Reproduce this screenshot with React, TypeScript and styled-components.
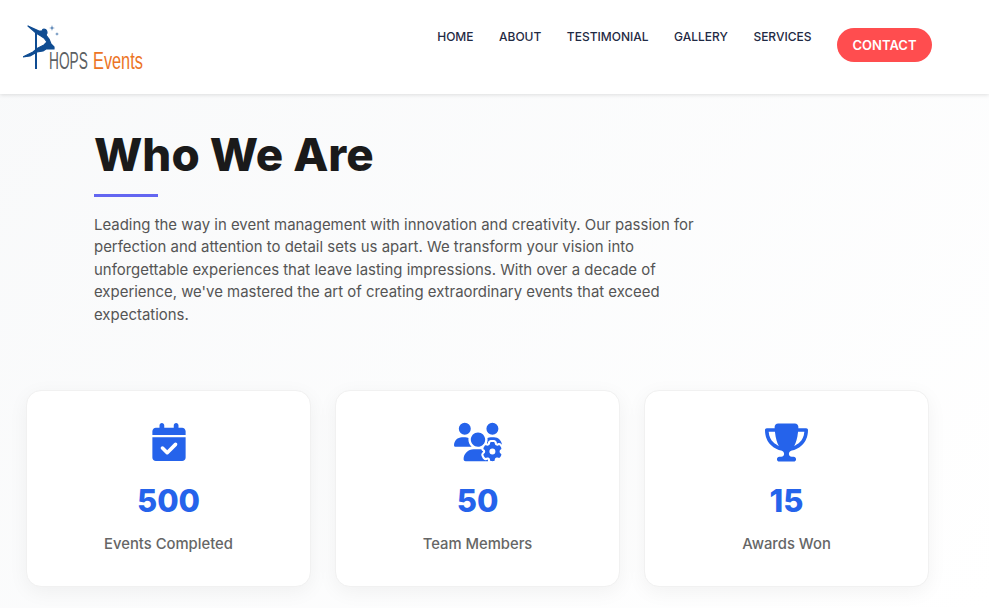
import React from "react";
import styled, { createGlobalStyle } from "styled-components";
import { FaCalendarCheck, FaTrophy, FaUsersGear } from "react-icons/fa6";

const GlobalStyle = createGlobalStyle`
  html, body {
    margin: 0;
    padding: 0;
    height: 608px;
    overflow: hidden;
    background: #fff;
    font-family: "Inter", "Open Sans", sans-serif;
  }
  * { box-sizing: border-box; }
`;

const Page = styled.div`
  width: 989px;
  height: 608px;
  overflow: hidden;
  background: linear-gradient(135deg, #f8f9fa 0%, #ffffff 100%);
`;

const Header = styled.header`
  height: 94px;
  background: #fff;
  box-shadow: 0 1px 4px rgba(0, 0, 0, 0.12);
  display: flex;
  justify-content: space-between;
  align-items: flex-start;
  padding: 0 57px 0 23px;
`;

const Logo = styled.a`
  display: flex;
  align-items: flex-end;
  height: 48px;
  margin-top: 25px;
`;

const DancerMark = styled.svg`
  flex: none;
  width: 36px;
  height: 46px;
  margin: 0 -10px 2px 0;
`;

const LogoText = styled.span<{ $accent?: boolean; $width: number; $squeeze: number }>`
  display: inline-block;
  width: ${({ $width }) => $width}px;
  white-space: nowrap;
  font-family: "Liberation Sans", sans-serif;
  font-size: 24px;
  line-height: 24px;
  transform: scaleX(${({ $squeeze }) => $squeeze});
  transform-origin: left center;
  margin-left: ${({ $accent }) => ($accent ? "5px" : "0")};
  color: ${({ $accent }) => ($accent ? "#ec7424" : "#5c5f63")};
`;

const Nav = styled.nav`
  display: flex;
  align-items: flex-start;
  padding-top: 28px;
`;

const NavLink = styled.a`
  font-size: 12px;
  font-weight: 500;
  line-height: 18px;
  color: #1f2a44;
  margin-right: 25.5px;
`;

const ContactButton = styled.a`
  width: 95px;
  height: 34px;
  border-radius: 17px;
  background: #ff4d4f;
  color: #fff;
  font-size: 13px;
  font-weight: 600;
  display: flex;
  align-items: center;
  justify-content: center;
`;

const About = styled.section`
  padding: 31px 0 0 94px;
`;

const Title = styled.h1`
  margin: 0;
  font-size: 45.7px;
  font-weight: 800;
  line-height: 60px;
  color: #1a1a1a;
`;

const Accent = styled.div`
  width: 64px;
  height: 3px;
  margin-top: 9px;
  background: #6366f1;
`;

const Intro = styled.p`
  margin: 16.5px 0 0;
  font-size: 14.95px;
  line-height: 22.5px;
  color: #555;
`;

const Stats = styled.div`
  display: grid;
  grid-template-columns: repeat(3, 285px);
  gap: 24px;
  padding: 64px 0 0 26px;
`;

const Card = styled.div`
  height: 197px;
  background: #fff;
  border: 1px solid #f1f1f1;
  border-radius: 15px;
  box-shadow: 0 5px 20px rgba(0, 0, 0, 0.05);
  display: flex;
  flex-direction: column;
  align-items: center;
  padding-top: 32px;
  color: #2563eb;
`;

const IconSlot = styled.div`
  height: 38px;
  display: flex;
  align-items: center;
  justify-content: center;

  svg {
    flex: none;
  }
`;

const Value = styled.div`
  margin-top: 18px;
  font-size: 31px;
  font-weight: 800;
  line-height: 44px;
  color: #2563eb;
`;

const Label = styled.div`
  margin-top: 10px;
  font-size: 14.8px;
  font-weight: 500;
  line-height: 22px;
  color: #666;
`;

const Dancer = () => (
  <DancerMark viewBox="0 0 36 46">
    <rect x="12" y="8" width="2" height="36" fill="#0f4c92" />
    <path
      d="M5 1 L16 6 L19 6 C20 3 24 4 24 8 L23 10 L26 14 L28 19 L31 22 L31 24 L23 24 L20 26 L14 27 L7 31 L0 32 L10 27 L15 23 L21 20 L24 17 L21 13 L18 11 L13 8 Z"
      fill="#0f4c92"
      stroke="#0f4c92"
      strokeWidth="1.2"
      strokeLinejoin="round"
    />
    <path d="M29 0 L29.6 2.4 L32 3 L29.6 3.6 L29 6 L28.4 3.6 L26 3 L28.4 2.4 Z" fill="#3b6ea8" />
    <path d="M34 7 L34.4 8.6 L36 9 L34.4 9.4 L34 11 L33.6 9.4 L32 9 L33.6 8.6 Z" fill="#3b6ea8" />
  </DancerMark>
);

const stats = [
  { icon: <FaCalendarCheck size={38} />, value: "500", label: "Events Completed" },
  { icon: <FaUsersGear size={48} />, value: "50", label: "Team Members" },
  { icon: <FaTrophy size={43} />, value: "15", label: "Awards Won" },
];

const navItems = ["HOME", "ABOUT", "TESTIMONIAL", "GALLERY", "SERVICES"];

const App: React.FC = () => {
  return (
    <Page>
      <GlobalStyle />
      <Header>
        <Logo>
          <Dancer />
          <LogoText $width={39} $squeeze={0.57}>HOPS</LogoText>
          <LogoText $accent $width={50} $squeeze={0.68}>Events</LogoText>
        </Logo>
        <Nav>
          {navItems.map((item) => (
            <NavLink key={item}>{item}</NavLink>
          ))}
          <ContactButton>CONTACT</ContactButton>
        </Nav>
      </Header>
      <About>
        <Title>Who We Are</Title>
        <Accent />
        <Intro>
          Leading the way in event management with innovation and creativity. Our passion for
          <br />
          perfection and attention to detail sets us apart. We transform your vision into
          <br />
          unforgettable experiences that leave lasting impressions. With over a decade of
          <br />
          experience, we've mastered the art of creating extraordinary events that exceed
          <br />
          expectations.
        </Intro>
      </About>
      <Stats>
        {stats.map((s) => (
          <Card key={s.label}>
            <IconSlot>{s.icon}</IconSlot>
            <Value>{s.value}</Value>
            <Label>{s.label}</Label>
          </Card>
        ))}
      </Stats>
    </Page>
  );
};

export default App;
